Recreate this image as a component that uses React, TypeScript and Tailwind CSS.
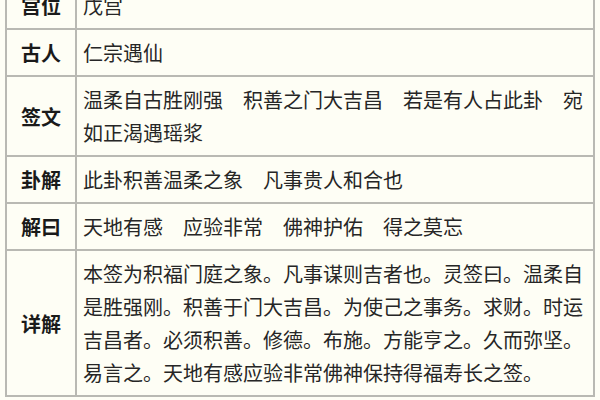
const rows: { label: string; lines: string[] }[] = [
  { label: '宫位', lines: ['戊宫'] },
  { label: '古人', lines: ['仁宗遇仙'] },
  {
    label: '签文',
    lines: ['温柔自古胜刚强　积善之门大吉昌　若是有人占此卦　宛', '如正渴遇瑶浆'],
  },
  { label: '卦解', lines: ['此卦积善温柔之象　凡事贵人和合也'] },
  { label: '解曰', lines: ['天地有感　应验非常　佛神护佑　得之莫忘'] },
  {
    label: '详解',
    lines: [
      '本签为积福门庭之象。凡事谋则吉者也。灵签曰。温柔自',
      '是胜强刚。积善于门大吉昌。为使己之事务。求财。时运',
      '吉昌者。必须积善。修德。布施。方能亨之。久而弥坚。',
      '易言之。天地有感应验非常佛神保持得福寿长之签。',
    ],
  },
];

export default function App() {
  return (
    <div
      className="w-[600px] h-[400px] overflow-hidden bg-[#fefef5]"
      style={{ fontFamily: '"Noto Sans CJK SC", "Noto Sans", sans-serif' }}
    >
      <table className="ml-[5px] mt-[-19px] w-[590px] border-collapse border-2 border-[#b9b9b3] text-[20px] leading-[33px]">
        <tbody>
          {rows.map((r) => (
            <tr key={r.label}>
              <th className="w-[70px] border-2 border-[#b9b9b3] py-[6px] text-center align-middle font-bold text-[#1a1a1a]">
                {r.label}
              </th>
              <td className="border-2 border-[#b9b9b3] py-[6px] pl-[6px] pr-0 align-middle text-[#262626] whitespace-nowrap">
                {r.lines.map((l, i) => (
                  <div key={i}>{l}</div>
                ))}
              </td>
            </tr>
          ))}
        </tbody>
      </table>
    </div>
  );
}
